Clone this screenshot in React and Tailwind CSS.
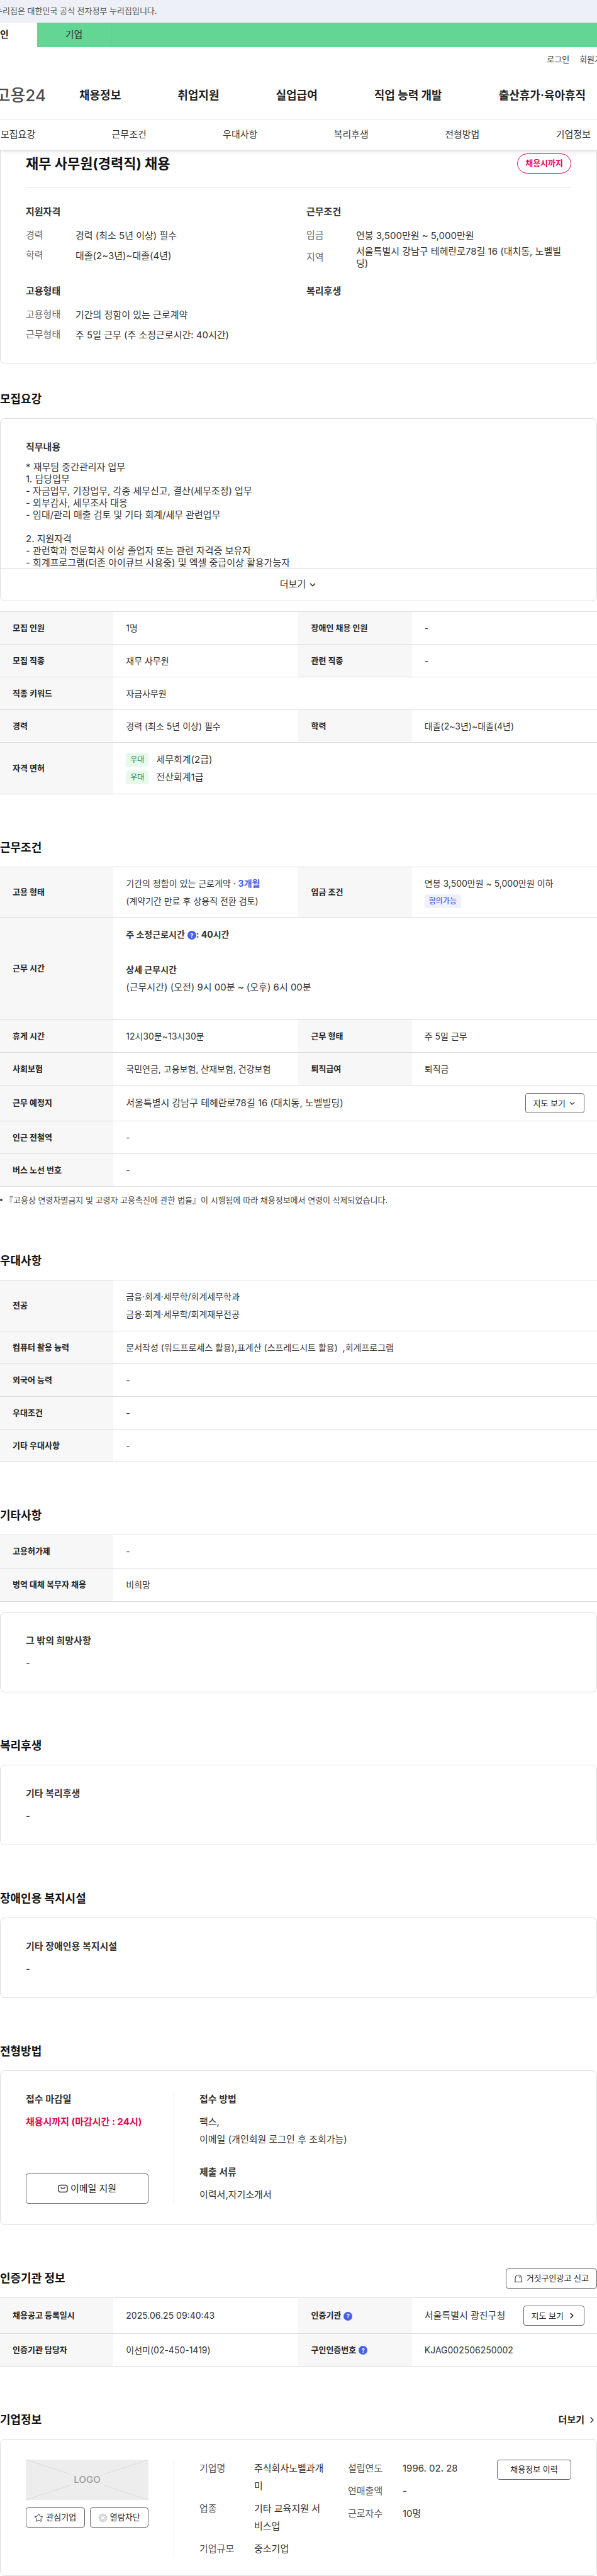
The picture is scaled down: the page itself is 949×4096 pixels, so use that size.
import { ChevronDown, ChevronRight, Star } from 'lucide-react';

const mainMenu = ['채용정보', '취업지원', '실업급여', '직업 능력 개발', '출산휴가·육아휴직'];
const subMenu = ['모집요강', '근무조건', '우대사항', '복리후생', '전형방법', '기업정보'];

const duties = [
  '* 재무팀 중간관리자 업무',
  '1. 담당업무',
  '- 자금업무, 기장업무, 각종 세무신고, 결산(세무조정) 업무',
  '- 외부감사, 세무조사 대응',
  '- 임대/관리 매출 검토 및 기타 회계/세무 관련업무',
  '',
  '2. 지원자격',
  '- 관련학과 전문학사 이상 졸업자 또는 관련 자격증 보유자',
  '- 회계프로그램(더존 아이큐브 사용중) 및 엑셀 중급이상 활용가능자',
];

function Header() {
  return (
    <header className="relative">
      <div className="h-9 bg-[#edf0f6] flex items-center">
        <p className="-ml-2 text-[13px] text-[#555]">누리집은 대한민국 공식 전자정부 누리집입니다.</p>
      </div>
      <div className="h-[39px] bg-[#63d694] flex">
        <a href="#" className="-ml-[59px] w-[118px] bg-white flex items-center justify-center text-[15px] font-bold text-[#222]">개인</a>
        <a href="#" className="w-[118px] border-r border-[#5bc98a] flex items-center justify-center text-[15px] text-[#333]">기업</a>
      </div>
      <div className="h-[39px] -mr-5 flex items-center justify-end gap-4 text-[13px] text-[#333]">
        <a href="#">로그인</a>
        <a href="#">회원가입</a>
      </div>
      <nav className="h-[76px] flex items-center border-b border-[#e6e6e6]">
        <a href="#" className="w-[73px] shrink-0 flex justify-end text-[26px] font-medium text-[#4d4d4d] whitespace-nowrap">고용24</a>
        <div className="ml-[53px] flex gap-[90px] text-lg font-bold text-[#222] whitespace-nowrap">
          {mainMenu.map(m => <a key={m} href="#">{m}</a>)}
        </div>
      </nav>
      <nav className="relative h-12 pl-px pr-2.5 flex items-center justify-between bg-white shadow-md text-[15px] text-[#333]">
        {subMenu.map(m => <a key={m} href="#">{m}</a>)}
      </nav>
    </header>
  );
}

function Heading({ children, right }) {
  return (
    <div className="flex items-center justify-between h-8 mb-3.5">
      <h2 className="text-lg font-bold text-[#111]">{children}</h2>
      {right}
    </div>
  );
}

function Section({ title, right, children }) {
  return (
    <section className="pt-[69px]">
      <Heading right={right}>{title}</Heading>
      {children}
    </section>
  );
}

function NoteCard({ title }) {
  return (
    <div className="h-32 px-10 pt-[33px] border border-[#ddd] rounded-lg">
      <h3 className="text-[15px] leading-6 font-bold text-[#333]">{title}</h3>
      <p className="mt-3 text-[15px] leading-6 text-[#333]">-</p>
    </div>
  );
}

function Table({ children }) {
  return (
    <table className="w-full table-fixed border-collapse border-t border-[#ddd] text-left">
      <colgroup>
        <col className="w-[19%]" />
        <col className="w-[31%]" />
        <col className="w-[19%]" />
        <col className="w-[31%]" />
      </colgroup>
      <tbody>{children}</tbody>
    </table>
  );
}

function Row({ h = 'h-[52px]', children }) {
  return <tr className={`${h} border-b border-[#ddd]`}>{children}</tr>;
}

function Th({ children }) {
  return <th scope="row" className="px-5 bg-[#f7f7f7] text-[13px] font-bold text-[#222]">{children}</th>;
}

function Td({ wide, children }) {
  return <td colSpan={wide ? 3 : 1} className="px-5 text-sm leading-7 text-[#333]">{children}</td>;
}

function Button({ className = '', children }) {
  return (
    <button type="button" className={`flex items-center justify-center border border-[#666] rounded bg-white text-[#222] whitespace-nowrap ${className}`}>
      {children}
    </button>
  );
}

function Help() {
  return (
    <button type="button" aria-label="도움말" className="inline-flex items-center justify-center size-3.5 ml-1 rounded-full bg-[#4461e8] text-[9px] leading-none font-bold text-white align-middle">?</button>
  );
}

function License({ name }) {
  return (
    <li className="flex items-center gap-3 h-[26px] text-[15px]">
      <span className="px-[7px] rounded bg-[#e7f8ed] text-xs leading-[22px] text-[#23843f]">우대</span>
      {name}
    </li>
  );
}

function SummaryGroup({ title, rows }) {
  return (
    <div>
      <h3 className="text-[15px] leading-6 font-bold text-[#333]">{title}</h3>
      <dl className="mt-[9px]">
        {rows.map(([label, value]) => (
          <div key={label} className="flex items-center min-h-8">
            <dt className="w-[79px] shrink-0 text-[15px] text-[#666]">{label}</dt>
            <dd className="text-[15px] leading-[19px] text-[#333] break-all">{value}</dd>
          </div>
        ))}
      </dl>
    </div>
  );
}

function CompanyFacts({ rows }) {
  return (
    <dl className="w-51 space-y-2">
      {rows.map(([label, value]) => (
        <div key={label} className="flex">
          <dt className="w-[87px] shrink-0 text-[15px] leading-7 text-[#555]">{label}</dt>
          <dd className="text-[15px] leading-7 text-[#333] break-all">{value}</dd>
        </div>
      ))}
    </dl>
  );
}

function MailIcon() {
  return (
    <svg width="16" height="14" viewBox="0 0 16 14" fill="none" stroke="#333" strokeWidth="1.4" strokeLinecap="round" className="mr-1" aria-hidden="true">
      <rect x="1" y="1.5" width="14" height="11" rx="3" />
      <path d="M5 5.500c1.200 1.800 4.800 1.800 6 0" />
    </svg>
  );
}

function SirenIcon() {
  return (
    <svg width="14" height="14" viewBox="0 0 14 14" fill="none" stroke="#333" strokeWidth="1.1" className="mr-1.5" aria-hidden="true">
      <path d="M2 12V6.500a5 5 0 0 1 10 0V12M.5 12.500h13M7.500 4c1.200.2 2 1 2.200 2.200" />
    </svg>
  );
}

function BlockIcon() {
  return (
    <svg width="15" height="15" viewBox="0 0 15 15" className="mr-1" aria-hidden="true">
      <circle cx="7.500" cy="7.500" r="7" fill="#d8d8d8" />
      <path d="m5 5 5 5m0-5-5 5" stroke="#fff" strokeWidth="1.500" />
    </svg>
  );
}

function LogoPlaceholder() {
  return (
    <div className="relative h-16 bg-[#ededed]">
      <svg className="size-full" viewBox="0 0 197 64" preserveAspectRatio="none" stroke="#d9d9d9" aria-hidden="true">
        <path d="M0 0 71 23M197 0l-71 23M0 64l71-23M197 64l-71-23" />
      </svg>
      <span className="absolute inset-0 flex items-center justify-center text-[15px] font-medium text-[#999]">LOGO</span>
    </div>
  );
}

export default function App() {
  return (
    <div className="overflow-hidden bg-white pb-px font-[Inter,'Noto_Sans_CJK_KR',sans-serif]">
      <Header />
      <main>
        <section className="h-[341px] px-10 border-x border-b border-[#ddd] rounded-b-lg">
          <div className="flex items-center justify-between h-[61px] pb-4 border-b border-[#e8e8e8]">
            <h1 className="text-[22px] font-bold text-[#111]">재무 사무원(경력직) 채용</h1>
            <span className="flex items-center h-8 px-3 rounded-full border border-[#de0a50] text-[13px] font-bold text-[#de0a50]">채용시까지</span>
          </div>
          <div className="grid grid-cols-[446px_1fr] gap-y-[23px] pt-[26px]">
            <SummaryGroup title="지원자격" rows={[['경력', '경력 (최소 5년 이상) 필수'], ['학력', '대졸(2~3년)~대졸(4년)']]} />
            <SummaryGroup title="근무조건" rows={[['임금', '연봉 3,500만원 ~ 5,000만원'], ['지역', '서울특별시 강남구 테헤란로78길 16 (대치동, 노벨빌딩)']]} />
            <SummaryGroup title="고용형태" rows={[['고용형태', '기간의 정함이 있는 근로계약'], ['근무형태', '주 5일 근무 (주 소정근로시간: 40시간)']]} />
            <SummaryGroup title="복리후생" rows={[]} />
          </div>
        </section>

        <section className="pt-10">
          <Heading>모집요강</Heading>
          <div className="mb-4 border border-[#ddd] rounded-lg">
            <div className="h-[237px] overflow-hidden px-10 pt-[33px]">
              <h3 className="text-[15px] leading-6 font-bold text-[#333]">직무내용</h3>
              <div className="mt-2.5 text-[15px] leading-[19px] text-[#333]">
                {duties.map((d, i) => <p key={i} className="min-h-[19px]">{d}</p>)}
              </div>
            </div>
            <button type="button" className="flex items-center justify-center gap-1 w-full h-[52px] border-t border-[#ddd] text-[15px] text-[#333]">
              더보기 <ChevronDown size={14} strokeWidth={3} />
            </button>
          </div>
          <Table>
            <Row><Th>모집 인원</Th><Td>1명</Td><Th>장애인 채용 인원</Th><Td>-</Td></Row>
            <Row><Th>모집 직종</Th><Td>재무 사무원</Td><Th>관련 직종</Th><Td>-</Td></Row>
            <Row><Th>직종 키워드</Th><Td wide>자금사무원</Td></Row>
            <Row><Th>경력</Th><Td>경력 (최소 5년 이상) 필수</Td><Th>학력</Th><Td>대졸(2~3년)~대졸(4년)</Td></Row>
            <Row h="h-[82px]">
              <Th>자격 면허</Th>
              <Td wide>
                <ul className="space-y-0.5">
                  <License name="세무회계(2급)" />
                  <License name="전산회계1급" />
                </ul>
              </Td>
            </Row>
          </Table>
        </section>

        <Section title="근무조건">
          <Table>
            <Row h="h-20">
              <Th>고용 형태</Th>
              <Td>
                <p>기간의 정함이 있는 근로계약 <strong className="text-[#4461e8]">· 3개월</strong></p>
                <p>(계약기간 만료 후 상용직 전환 검토)</p>
              </Td>
              <Th>임금 조건</Th>
              <Td>
                <p>연봉 3,500만원 ~ 5,000만원 이하</p>
                <p className="flex items-center h-7"><span className="px-[7px] rounded bg-[#eff1fe] text-xs leading-[22px] font-medium text-[#4461e8]">협의가능</span></p>
              </Td>
            </Row>
            <Row h="h-[163px]">
              <Th>근무 시간</Th>
              <Td wide>
                <p className="font-bold">주 소정근로시간<Help />: 40시간</p>
                <p className="mt-7 font-bold">상세 근무시간</p>
                <p className="mb-6 text-[15px]">(근무시간) (오전) 9시 00분 ~ (오후) 6시 00분</p>
              </Td>
            </Row>
            <Row><Th>휴게 시간</Th><Td>12시30분~13시30분</Td><Th>근무 형태</Th><Td>주 5일 근무</Td></Row>
            <Row><Th>사회보험</Th><Td>국민연금, 고용보험, 산재보험, 건강보험</Td><Th>퇴직급여</Th><Td>퇴직금</Td></Row>
            <Row h="h-[57px]">
              <Th>근무 예정지</Th>
              <Td wide>
                <div className="flex items-center justify-between text-[15px]">
                  서울특별시 강남구 테헤란로78길 16 (대치동, 노벨빌딩)
                  <Button className="h-8 px-3 gap-1 text-[13px]">지도 보기 <ChevronDown size={13} strokeWidth={2.5} /></Button>
                </div>
              </Td>
            </Row>
            <Row><Th>인근 전철역</Th><Td wide>-</Td></Row>
            <Row><Th>버스 노선 번호</Th><Td wide>-</Td></Row>
          </Table>
          <p className="flex items-center pt-2.5 pb-px text-[13px] leading-[22px] text-[#444]">
            <span className="size-1 mr-1 rounded-full bg-[#444]" />
            『고용상 연령차별금지 및 고령자 고용촉진에 관한 법률』이 시행됨에 따라 채용정보에서 연령이 삭제되었습니다.
          </p>
        </Section>

        <Section title="우대사항">
          <Table>
            <Row h="h-[81px]">
              <Th>전공</Th>
              <Td wide>
                <p>금융·회계·세무학/회계세무학과</p>
                <p>금융·회계·세무학/회계재무전공</p>
              </Td>
            </Row>
            <Row><Th>컴퓨터 활용 능력</Th><Td wide>문서작성 (워드프로세스 활용),표계산 (스프레드시트 활용) &nbsp;,회계프로그램</Td></Row>
            <Row><Th>외국어 능력</Th><Td wide>-</Td></Row>
            <Row><Th>우대조건</Th><Td wide>-</Td></Row>
            <Row><Th>기타 우대사항</Th><Td wide>-</Td></Row>
          </Table>
        </Section>

        <Section title="기타사항">
          <Table>
            <Row h="h-[53px]"><Th>고용허가제</Th><Td wide>-</Td></Row>
            <Row h="h-[53px]"><Th>병역 대체 복무자 채용</Th><Td wide>비희망</Td></Row>
          </Table>
          <div className="pt-4">
            <NoteCard title="그 밖의 희망사항" />
          </div>
        </Section>

        <Section title="복리후생">
          <NoteCard title="기타 복리후생" />
        </Section>

        <Section title="장애인용 복지시설">
          <NoteCard title="기타 장애인용 복지시설" />
        </Section>

        <Section title="전형방법">
          <div className="flex px-10 py-[33px] border border-[#ddd] rounded-lg">
            <div className="flex flex-col w-[236px] pr-10 border-r border-[#e8e8e8]">
              <h3 className="text-[15px] leading-6 font-bold text-[#333]">접수 마감일</h3>
              <p className="mt-2.5 text-[15px] leading-7 font-bold text-[#de0a50] whitespace-nowrap">채용시까지 (마감시간 : 24시)</p>
              <Button className="mt-auto h-12 text-[15px]"><MailIcon />이메일 지원</Button>
            </div>
            <div className="pl-10 text-[15px] leading-7 text-[#333]">
              <h3 className="leading-6 font-bold">접수 방법</h3>
              <p className="mt-2.5">팩스,</p>
              <p>이메일 (개인회원 로그인 후 조회가능)</p>
              <h3 className="mt-[26px] leading-6 font-bold">제출 서류</h3>
              <p className="mt-2.5">이력서,자기소개서</p>
            </div>
          </div>
        </Section>

        <Section title="인증기관 정보" right={<Button className="h-8 px-3 text-[13px]"><SirenIcon />거짓구인광고 신고</Button>}>
          <Table>
            <Row h="h-[57px]">
              <Th>채용공고 등록일시</Th>
              <Td>2025.06.25 09:40:43</Td>
              <Th>인증기관<Help /></Th>
              <Td>
                <div className="flex items-center justify-between text-[15px] whitespace-nowrap">
                  서울특별시 광진구청
                  <Button className="h-8 px-3 gap-1.5 text-[13px]">지도 보기 <ChevronRight size={14} strokeWidth={3} /></Button>
                </div>
              </Td>
            </Row>
            <Row><Th>인증기관 담당자</Th><Td>이선미(02-450-1419)</Td><Th>구인인증번호<Help /></Th><Td>KJAG002506250002</Td></Row>
          </Table>
        </Section>

        <Section title="기업정보" right={<a href="#" className="flex items-center gap-1 text-[15px] font-bold text-[#222]">더보기 <ChevronRight size={16} /></a>}>
          <div className="flex h-[218px] px-10 py-8 border border-[#ddd] rounded-lg">
            <div className="w-[236px] shrink-0 pr-10 border-r border-[#e8e8e8]">
              <LogoPlaceholder />
              <div className="flex gap-2 mt-3">
                <Button className="flex-1 h-8 text-[13px]"><Star size={15} strokeWidth={1.5} className="mr-1" />관심기업</Button>
                <Button className="flex-1 h-8 text-[13px]"><BlockIcon />열람차단</Button>
              </div>
            </div>
            <div className="flex flex-1 gap-8 pl-10">
              <CompanyFacts rows={[['기업명', '주식회사노벨과개미'], ['업종', '기타 교육지원 서비스업'], ['기업규모', '중소기업']]} />
              <CompanyFacts rows={[['설립연도', '1996. 02. 28'], ['연매출액', '-'], ['근로자수', '10명']]} />
            </div>
            <Button className="w-[118px] h-8 shrink-0 text-[13px]">채용정보 이력</Button>
          </div>
        </Section>
      </main>
    </div>
  );
}
